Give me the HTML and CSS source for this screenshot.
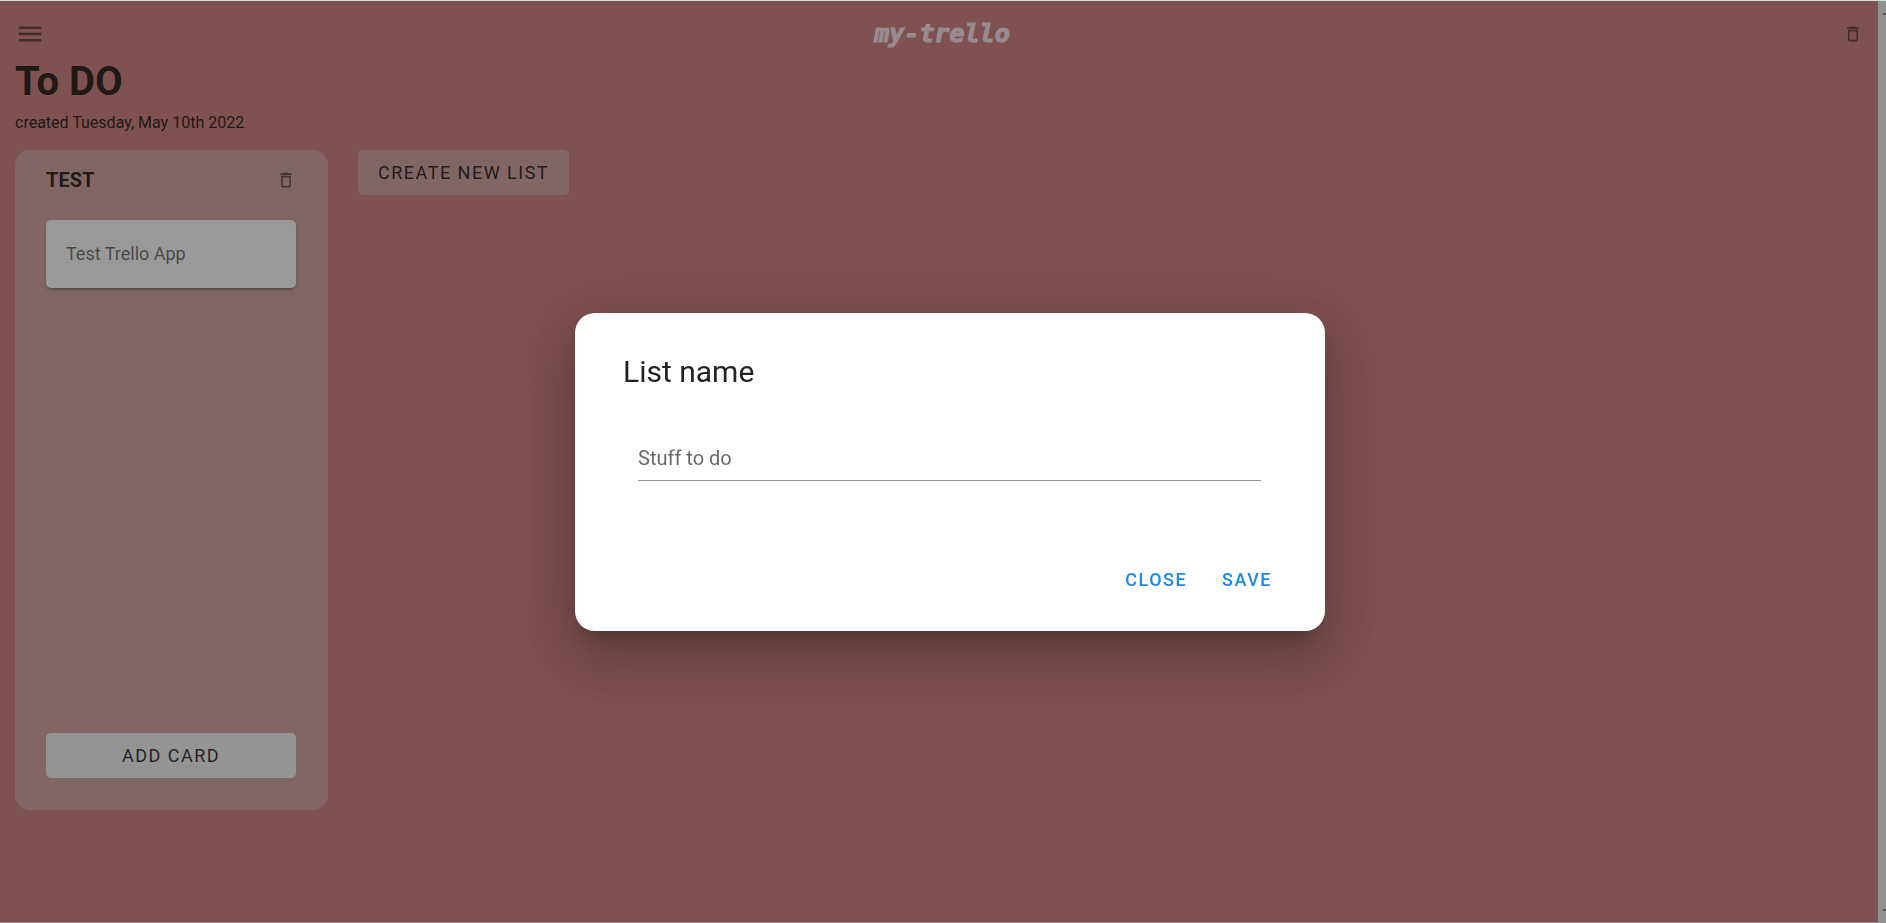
FILE: index.html
```html
<!DOCTYPE html>
<html lang="en">
<head>
<meta charset="utf-8">
<title>my-trello</title>
<link rel="stylesheet" href="styles.css">
</head>
<body>
<div class="app">
  <div class="page">
    <header class="topbar">
      <button class="icon-button menu" aria-label="Menu">
        <svg width="30" height="30" viewBox="0 0 24 24"><path d="M3 6h18v2H3V6m0 5h18v2H3v-2m0 5h18v2H3v-2z"/></svg>
      </button>
      <a class="logo" href="#">my-trello</a>
      <button class="icon-button" aria-label="Delete board">
        <svg width="20" height="20" viewBox="0 0 24 24"><path d="M6 19a2 2 0 0 0 2 2h8a2 2 0 0 0 2-2V7H6v12M8 9h8v10H8V9m7.500-5l-1-1h-5l-1 1H5v2h14V4h-3.500z"/></svg>
      </button>
    </header>
    <main class="board">
      <h1 class="board-title">To DO</h1>
      <p class="board-date">created Tuesday, May 10th 2022</p>
      <div class="lists">
        <section class="list">
          <div class="list-head">
            <h2 class="list-title">TEST</h2>
            <button class="icon-button" aria-label="Delete list">
              <svg width="20" height="20" viewBox="0 0 24 24"><path d="M6 19a2 2 0 0 0 2 2h8a2 2 0 0 0 2-2V7H6v12M8 9h8v10H8V9m7.500-5l-1-1h-5l-1 1H5v2h14V4h-3.500z"/></svg>
            </button>
          </div>
          <article class="card">Test Trello App</article>
          <button class="button add-card">ADD CARD</button>
        </section>
        <button class="button create-list">CREATE NEW LIST</button>
      </div>
    </main>
  </div>
  <div class="scrollbar"><span class="arrow up"></span><span class="arrow down"></span></div>
</div>
<div class="overlay">
  <form class="dialog" role="dialog" aria-labelledby="dialog-title">
    <h2 class="dialog-title" id="dialog-title"><label for="list-name">List name</label></h2>
    <input class="field" id="list-name" type="text" placeholder="Stuff to do">
    <div class="actions">
      <button class="text-button" type="button">CLOSE</button>
      <button class="text-button" type="button">SAVE</button>
    </div>
  </form>
</div>
</body>
</html>
```
FILE: styles.css
```css
* { box-sizing: border-box; }
body {
  margin: 0;
  padding-top: 1px;
  background: #d9dcdc;
  color: rgba(0, 0, 0, 0.87);
  font-family: Roboto, "Liberation Sans", sans-serif;
  overflow: hidden;
}
h1, h2, p { margin: 0; }
button { border: 0; padding: 0; background: none; font: inherit; color: inherit; }
svg { display: block; fill: rgba(0, 0, 0, 0.54); }

.app { display: flex; height: calc(100vh - 1px); background: #cf7a78; }
.page { flex: 1; border-bottom: 1px solid #f1f1f1; }
.topbar {
  display: grid;
  grid-template-columns: 1fr auto 1fr;
  align-items: center;
  height: 60px;
  padding: 5px 15px 0;
}
.topbar .icon-button:last-child { justify-self: end; }
.menu { justify-self: start; }
.logo {
  padding-left: 6px;
  color: #ffe6f0;
  font: italic 700 25px "DejaVu Sans Mono", monospace;
  text-decoration: none;
  -webkit-text-stroke: 1px #ffe6f0;
  stroke-linejoin: round;
}
.board { padding: 0 15px; }
.board-title { font-size: 40px; line-height: 42px; font-weight: 700; }
.board-date { margin-top: 8px; font-size: 16px; line-height: 24px; }
.lists { display: flex; align-items: flex-start; gap: 30px; margin-top: 15px; }
.list {
  display: flex;
  flex-direction: column;
  width: 313px;
  height: 660px;
  padding: 15px 32px 32px 31px;
  border-radius: 15px;
  background: #d5a19f;
}
.list-head { display: flex; align-items: center; justify-content: space-between; height: 30px; }
.list-title { font-size: 20px; line-height: 30px; font-weight: 700; }
.card {
  margin-top: 25px;
  padding: 20px;
  border-radius: 5px;
  background: #fff;
  color: rgba(0, 0, 0, 0.6);
  font-size: 18px;
  line-height: 28px;
  box-shadow: 0 3px 2px -2px rgba(0, 0, 0, 0.2), 0 2px 3px rgba(0, 0, 0, 0.14), 0 1px 5px rgba(0, 0, 0, 0.12);
}
.button {
  height: 45px;
  padding: 0 20px;
  border-radius: 5px;
  font-size: 18px;
  font-weight: 400;
  letter-spacing: 1.5px;
}
.add-card { margin-top: auto; background: #f5f5f5; }
.create-list { background: #d5a19f; }

.scrollbar {
  display: flex;
  flex-direction: column;
  justify-content: space-between;
  width: 8px;
  padding: 12px 0;
  background: #f1f1f1;
  overflow: hidden;
}
.arrow { align-self: flex-end; width: 3px; height: 2px; background: #888; }

.overlay {
  position: fixed;
  inset: 1px 0 0;
  display: flex;
  align-items: center;
  justify-content: center;
  padding-top: 19px;
  padding-left: 14px;
  background: rgba(33, 33, 33, 0.46);
}
.dialog {
  width: 750px;
  padding: 35px 48px 29px;
  border-radius: 20px;
  background: #fff;
  box-shadow: 0 14px 19px -9px rgba(0, 0, 0, 0.2), 0 30px 48px 4px rgba(0, 0, 0, 0.14), 0 12px 58px 10px rgba(0, 0, 0, 0.12);
}
.dialog-title { font-size: 30px; line-height: 48px; font-weight: 400; }
.field {
  display: block;
  width: calc(100% - 31px);
  height: 44px;
  margin: 41px 0 0 15px;
  padding: 0;
  border: 0;
  border-bottom: 1px solid #949494;
  outline: 0;
  font: 20px Roboto, sans-serif;
}
.field::placeholder { color: rgba(0, 0, 0, 0.6); }
.actions { display: flex; justify-content: flex-end; gap: 10px; margin-top: 76px; }
.text-button {
  height: 45px;
  padding: 0 5px 0 20px;
  color: #1e88e5;
  font-size: 18px;
  font-weight: 500;
  letter-spacing: 1.5px;
}
```
